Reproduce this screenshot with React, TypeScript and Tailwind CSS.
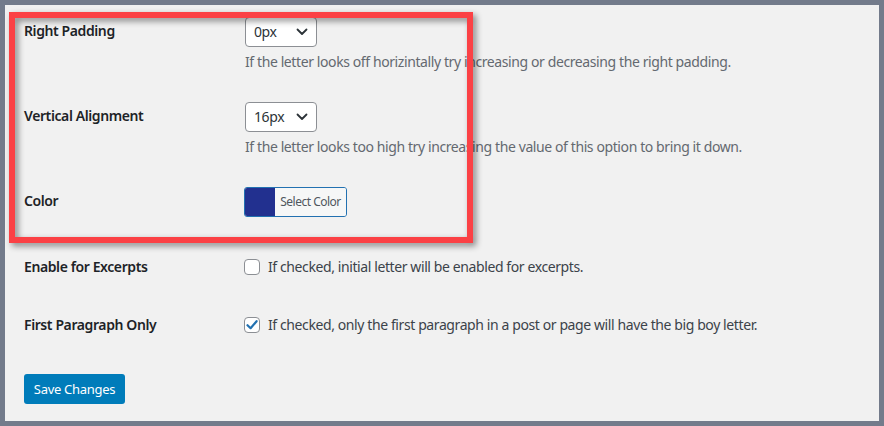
import React from "react";

const font = { fontFamily: '"Noto Sans", "Open Sans", sans-serif' };

function Chevron() {
  return (
    <svg width="12" height="8" viewBox="0 0 12 8" fill="none">
      <path d="M1.5 1.5 L6 6 L10.5 1.5" stroke="#2c3338" strokeWidth="1.8" strokeLinecap="round" strokeLinejoin="round" />
    </svg>
  );
}

function Select({ value }: { value: string }) {
  return (
    <div className="w-[72px] h-[30px] bg-white border border-[#8c8f94] rounded-[4px] pl-[8px] pr-[8px] flex items-center justify-between text-[14px] text-[#2c3338]">
      <span>{value}</span>
      <Chevron />
    </div>
  );
}

function Checkbox({ checked }: { checked?: boolean }) {
  return (
    <div className="w-[16px] h-[16px] bg-white border border-[#8c8f94] rounded-[4px] flex items-center justify-center shrink-0">
      {checked && (
        <svg width="14" height="14" viewBox="0 0 14 14" fill="none">
          <path d="M2.5 7.2 L5.6 10.2 L11.6 3.2" stroke="#2271b1" strokeWidth="2.2" strokeLinecap="round" strokeLinejoin="round" />
        </svg>
      )}
    </div>
  );
}

export default function App() {
  return (
    <div className="w-[884px] h-[426px] bg-[#737b8b] p-[5px]" style={font}>
      <div className="relative w-full h-full bg-[#f1f1f1] pl-[19px] pt-[12px] text-[14px] leading-[20px] tracking-[-0.4px]">
        {/* Row 1 */}
        <div className="flex">
          <div className="w-[221px] pt-[4px] font-semibold text-[#1d2327]">Right Padding</div>
          <div>
            <Select value="0px" />
            <p className="mt-[5px] text-[#646970]">
              If the letter looks off horizintally try increasing or decreasing the right padding.
            </p>
          </div>
        </div>
        {/* Row 2 */}
        <div className="flex mt-[30px]">
          <div className="w-[221px] pt-[4px] font-semibold text-[#1d2327]">Vertical Alignment</div>
          <div>
            <Select value="16px" />
            <p className="mt-[5px] text-[#646970]">
              If the letter looks too high try increasing the value of this option to bring it down.
            </p>
          </div>
        </div>
        {/* Row 3 */}
        <div className="flex mt-[30px]">
          <div className="w-[220px] pt-[4px] font-semibold text-[#1d2327]">Color</div>
          <div className="flex h-[30px] w-[103px] border border-[#2271b1] rounded-[3px] overflow-hidden">
            <div className="w-[30px] h-full bg-[#22308f]" />
            <div className="flex-1 bg-[#f6f7f7] flex items-center justify-center text-[12px] text-[#50575e] tracking-[-0.5px]">
              Select Color
            </div>
          </div>
        </div>
        {/* Row 4 */}
        <div className="flex mt-[40px] items-center h-[20px]">
          <div className="w-[220px] font-semibold text-[#1d2327]">Enable for Excerpts</div>
          <div className="flex items-center gap-[8px] text-[#3c434a]">
            <Checkbox />
            <span>If checked, initial letter will be enabled for excerpts.</span>
          </div>
        </div>
        {/* Row 5 */}
        <div className="flex mt-[38px] items-center h-[20px]">
          <div className="w-[220px] font-semibold text-[#1d2327]">First Paragraph Only</div>
          <div className="flex items-center gap-[8px] text-[#3c434a]">
            <Checkbox checked />
            <span>If checked, only the first paragraph in a post or page will have the big boy letter.</span>
          </div>
        </div>
        {/* Save */}
        <div className="mt-[39px]">
          <button className="h-[30px] w-[101px] bg-[#007cba] text-white text-[13px] rounded-[3px] tracking-[-0.3px]">
            Save Changes
          </button>
        </div>

        {/* Annotation box */}
        <div className="absolute left-[4px] top-[7px] w-[464px] h-[231px] border-[6px] border-[#fb4145] pointer-events-none drop-shadow-[3px_3px_3px_rgba(0,0,0,0.45)]" />
      </div>
    </div>
  );
}
